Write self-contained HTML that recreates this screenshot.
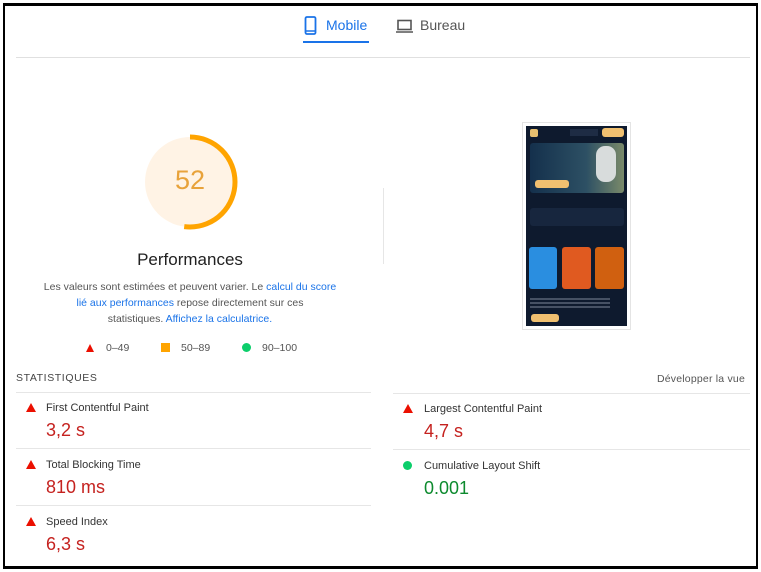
<!DOCTYPE html>
<html><head><meta charset="utf-8"><style>
*{margin:0;padding:0;box-sizing:border-box}
body{width:761px;height:572px;background:#fff;font-family:"Liberation Sans",sans-serif;position:relative;overflow:hidden;color:#212121}
.a{position:absolute}
.frame{left:3px;top:3px;width:755px;height:566px;border:2px solid #000;border-top-width:3px;border-bottom-width:3px}
.lbl{font-size:11px;color:#333}
.val{font-size:18px;color:#c5221f}
.tri{width:0;height:0;border-left:5px solid transparent;border-right:5px solid transparent;border-bottom:9px solid #eb0f00}
.hl{height:1px;background:#e6e6e6}
a{color:#1a73e8;text-decoration:none}
</style></head><body>
<div class="a frame"></div>
<svg class="a" style="left:304px;top:16px" width="14" height="20" viewBox="0 0 14 20"><rect x="1.5" y="1" width="10" height="17" rx="1.5" fill="none" stroke="#1a73e8" stroke-width="1.8"/><line x1="2" y1="15" x2="11" y2="15" stroke="#1a73e8" stroke-width="1.5"/></svg>
<div class="a" style="left:326px;top:17px;font-size:14px;color:#1a73e8">Mobile</div>
<div class="a" style="left:303px;top:41px;width:66px;height:2px;background:#1a73e8"></div>
<svg class="a" style="left:396px;top:19px" width="18" height="15" viewBox="0 0 18 15"><rect x="2" y="1.5" width="13" height="9" fill="none" stroke="#555" stroke-width="1.6"/><line x1="0" y1="13" x2="17" y2="13" stroke="#555" stroke-width="1.6"/></svg>
<div class="a" style="left:420px;top:17px;font-size:14px;color:#555">Bureau</div>
<div class="a hl" style="left:16px;top:57px;width:734px;background:#e0e0e0"></div>
<svg class="a" style="left:142px;top:134px" width="96" height="96" viewBox="0 0 96 96">
<circle cx="48" cy="48" r="45" fill="#fff3e5"/>
<circle cx="48" cy="48" r="45" fill="none" stroke="#ffa400" stroke-width="5" stroke-dasharray="147 300" transform="rotate(-90 48 48)"/>
</svg>
<div class="a" style="left:140px;top:165px;width:100px;text-align:center;font-size:27px;color:#e8a23a">52</div>
<div class="a" style="left:90px;top:250px;width:200px;text-align:center;font-size:17px;color:#212121">Performances</div>
<div class="a" style="left:20px;top:279px;width:340px;text-align:center;font-size:10.5px;line-height:16px;color:#555;white-space:nowrap">Les valeurs sont estimées et peuvent varier. Le <a>calcul du score</a><br><a>lié aux performances</a> repose directement sur ces<br>statistiques. <a>Affichez la calculatrice.</a></div>
<div class="a" style="left:86px;top:344px;border-left:4px solid transparent;border-right:4px solid transparent;border-bottom:8px solid #eb0f00"></div>
<div class="a" style="left:106px;top:342px;font-size:10.5px;color:#555">0–49</div>
<div class="a" style="left:161px;top:343px;width:9px;height:9px;background:#ffa400"></div>
<div class="a" style="left:181px;top:342px;font-size:10.5px;color:#555">50–89</div>
<div class="a" style="left:242px;top:343px;width:9px;height:9px;border-radius:50%;background:#0cce6b"></div>
<div class="a" style="left:262px;top:342px;font-size:10.5px;color:#555">90–100</div>
<div class="a" style="left:383px;top:188px;width:1px;height:76px;background:#e6e6e6"></div>
<div class="a" style="left:522px;top:122px;width:109px;height:208px;border:1px solid #e4e4e4;background:#fff"></div>
<div class="a" style="left:526px;top:126px;width:101px;height:200px;background:#0e1a2e"></div>
<div class="a" style="left:530px;top:129px;width:8px;height:8px;background:#e8c070;border-radius:2px"></div>
<div class="a" style="left:570px;top:129px;width:28px;height:7px;background:#1e2c44"></div>
<div class="a" style="left:602px;top:128px;width:22px;height:9px;background:#f0c070;border-radius:3px"></div>
<div class="a" style="left:530px;top:143px;width:94px;height:50px;background:linear-gradient(90deg,#14304c,#2d5064 60%,#7a8a6a);border-radius:3px"></div>
<div class="a" style="left:596px;top:146px;width:20px;height:36px;background:#d8dcdc;border-radius:9px"></div>
<div class="a" style="left:535px;top:180px;width:34px;height:8px;background:#f0c070;border-radius:3px"></div>
<div class="a" style="left:530px;top:208px;width:94px;height:18px;background:#17263e;border-radius:3px"></div>
<div class="a" style="left:529px;top:247px;width:28px;height:42px;background:#2a8ee0;border-radius:3px"></div>
<div class="a" style="left:562px;top:247px;width:29px;height:42px;background:#e05a20;border-radius:3px"></div>
<div class="a" style="left:595px;top:247px;width:29px;height:42px;background:#d06010;border-radius:3px"></div>
<div class="a" style="left:530px;top:296px;width:80px;height:14px;background:repeating-linear-gradient(#0e1a2e 0 2px,#6c7688 2px 4px);opacity:.6"></div>
<div class="a" style="left:531px;top:314px;width:28px;height:8px;background:#f0c070;border-radius:3px"></div>
<div class="a" style="left:16px;top:372px;font-size:10.5px;letter-spacing:.6px;color:#444">STATISTIQUES</div>
<div class="a" style="right:16px;top:373px;font-size:10.5px;color:#555;letter-spacing:.2px">Développer la vue</div>
<div class="a hl" style="left:16px;top:392px;width:355px"></div>
<div class="a hl" style="left:393px;top:393px;width:357px"></div>
<div class="a hl" style="left:16px;top:448px;width:355px"></div>
<div class="a hl" style="left:393px;top:449px;width:357px"></div>
<div class="a hl" style="left:16px;top:505px;width:355px"></div>
<div class="a tri" style="left:26px;top:403px"></div><div class="a lbl" style="left:46px;top:402px">First Contentful Paint</div><div class="a val" style="left:46px;top:420px">3,2 s</div>
<div class="a tri" style="left:26px;top:460px"></div><div class="a lbl" style="left:46px;top:459px">Total Blocking Time</div><div class="a val" style="left:46px;top:477px">810 ms</div>
<div class="a tri" style="left:26px;top:517px"></div><div class="a lbl" style="left:46px;top:516px">Speed Index</div><div class="a val" style="left:46px;top:534px">6,3 s</div>
<div class="a tri" style="left:403px;top:404px"></div><div class="a lbl" style="left:424px;top:403px">Largest Contentful Paint</div><div class="a val" style="left:424px;top:421px">4,7 s</div>
<div class="a" style="left:403px;top:461px;width:9px;height:9px;border-radius:50%;background:#0cce6b"></div><div class="a lbl" style="left:424px;top:460px">Cumulative Layout Shift</div><div class="a val" style="left:424px;top:478px;color:#0d8a2e">0.001</div>
</body></html>
